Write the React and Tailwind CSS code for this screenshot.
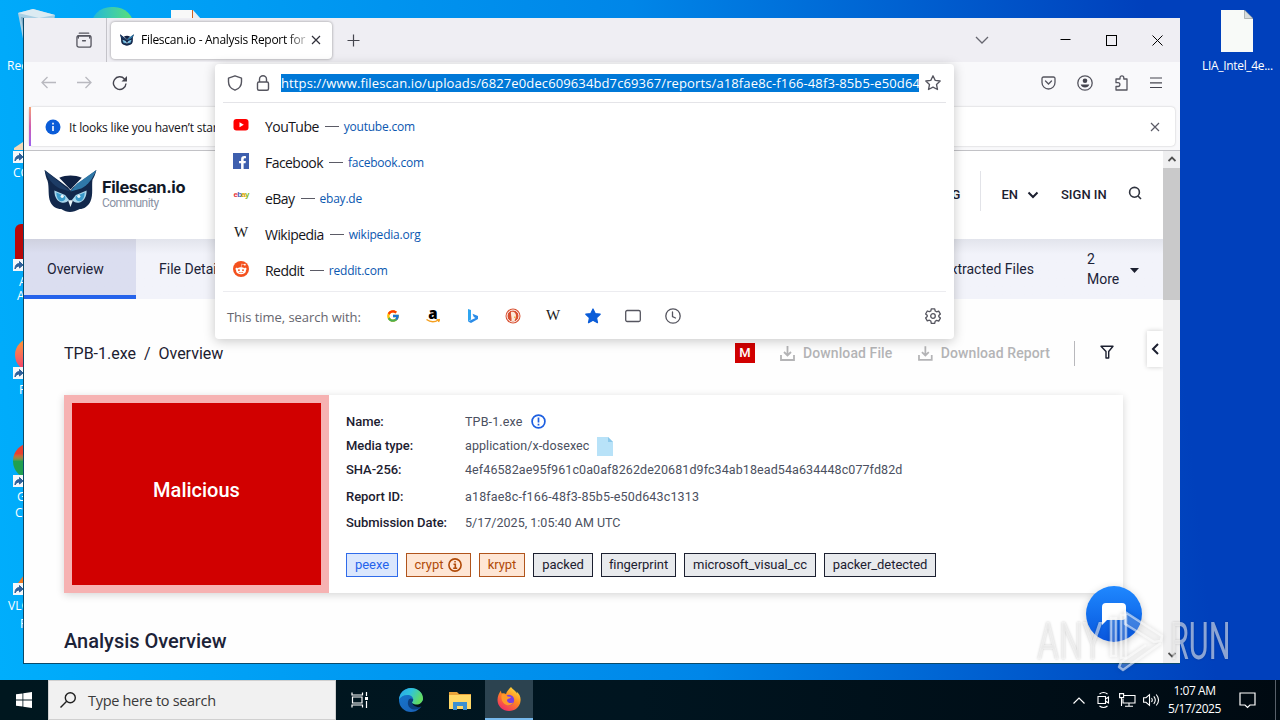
import React from 'react';
import { FcGoogle } from 'react-icons/fc';
import { FaRedditAlien, FaFacebookF } from 'react-icons/fa';

const suggestions = [
  { id: 'youtube', name: 'YouTube', url: 'youtube.com' },
  { id: 'facebook', name: 'Facebook', url: 'facebook.com' },
  { id: 'ebay', name: 'eBay', url: 'ebay.de' },
  { id: 'wikipedia', name: 'Wikipedia', url: 'wikipedia.org' },
  { id: 'reddit', name: 'Reddit', url: 'reddit.com' },
];

const details = [
  { label: 'Name:', value: 'TPB-1.exe', row: 'h-6', spacing: 'tracking-[0.15px]', extra: 'alert' },
  { label: 'Media type:', value: 'application/x-dosexec', row: 'h-6', spacing: 'tracking-[0.08px]', extra: 'file' },
  { label: 'SHA-256:', value: '4ef46582ae95f961c0a0af8262de20681d9fc34ab18ead54a634448c077fd82d', row: 'h-6', spacing: 'tracking-[0.09px]' },
  { label: 'Report ID:', value: 'a18fae8c-f166-48f3-85b5-e50d643c1313', row: 'h-[29px] pt-px', spacing: 'tracking-[0.16px]' },
  { label: 'Submission Date:', value: '5/17/2025, 1:05:40 AM UTC', row: 'h-6', spacing: 'tracking-[0.02px]' },
];

const tags = [
  { text: 'peexe', style: 'w-[52px] border-[#2f6bea] bg-[#dbe7fd] text-[#2563eb]' },
  { text: 'crypt', style: 'w-[65px] border-[#b0541c] bg-[#fee6d5] text-[#b04a08]', info: true },
  { text: 'krypt', style: 'w-[46px] border-[#b0541c] bg-[#fee6d5] text-[#b04a08]' },
  { text: 'packed', style: 'w-[60px] border-[#1c2030] bg-[#e8eaed] text-[#1c2030]' },
  { text: 'fingerprint', style: 'w-[75px] border-[#1c2030] bg-[#e8eaed] text-[#1c2030]' },
  { text: 'microsoft_visual_cc', style: 'w-[132px] border-[#1c2030] bg-[#e8eaed] text-[#1c2030]' },
  { text: 'packer_detected', style: 'w-[112px] border-[#1c2030] bg-[#e8eaed] text-[#1c2030]' },
];

const Owl = ({ className }) => (
  <svg className={className} viewBox="0 0 53 43">
    <path d="M0 0l24 18 2.500 3 2.500-3L53 0c-1 4-2 7-4 10-1 7 1 15-2 22-2 5-7 8-11 8-4 2-7 3-10 3s-6-1-9-3c-5 0-9-3-11-7-3-7-1-15-3-22C1.500 8 .5 4 0 0z" fill="#12284c" />
    <path d="M15 8c7-3 16-3 23 0L26.500 20 15 8z" fill="#0f2144" />
    <path d="M53 0L33 14l-6.500 8 11-3C45 15 49 9 53 0z" fill="#2f78a8" />
    <path d="M0 0l17 14 9.500 8-11-3C8 15 3 9 0 0z" fill="#1d3c66" />
    <path d="M10 21l11 4.500 5.500 7 5.500-7L43 21c0 7-3 11.500-8 12.500-3 .5-5.500-1-7-3l-1.500 3-1.500-3c-1.500 2-4 3.500-7 3C13 32.500 10 28 10 21z" fill="#a9d6ec" />
    <path d="M12 23l9 4c1 3-1 5.500-4 5S12 28 12 23zM41 23l-9 4c-1 3 1 5.500 4 5s5-4 5-9z" fill="#3a9acb" />
    <circle cx="18" cy="27" r="1.600" fill="#eaf6fb" />
    <circle cx="35" cy="27" r="1.600" fill="#eaf6fb" />
    <path d="M24 31h5l-2.500 7z" fill="#e8f3f8" />
  </svg>
);

const ShortcutArrow = () => (
  <svg className="h-3 w-3" viewBox="0 0 12 12">
    <rect width="12" height="12" fill="#f4f7fa" />
    <path d="M2 10c0-4 2-5.500 4.500-5.500V2.500L10 6 6.500 9V7C4.500 7 3 8 2 10z" fill="#2d5f9a" stroke="#2d5f9a" strokeWidth="1" />
  </svg>
);

const EdgeLogo = ({ className }) => (
  <svg className={className} viewBox="0 0 24 24">
    <defs>
      <linearGradient id="edgeTop" x1="0" x2="1" y1="0" y2="0.400">
        <stop offset="0" stopColor="#2aa5e8" />
        <stop offset="0.500" stopColor="#2fc3dc" />
        <stop offset="1" stopColor="#62dc62" />
      </linearGradient>
      <linearGradient id="edgeBody" x1="0" x2="1" y1="0" y2="1">
        <stop offset="0" stopColor="#1478ce" />
        <stop offset="1" stopColor="#1b5fb5" />
      </linearGradient>
    </defs>
    <circle cx="12" cy="12" r="12" fill="url(#edgeBody)" />
    <path d="M0 11.500C.5 5 5.500 0 12 0s12 4.500 12 10.500c0 4-3 6.500-6.500 6.500-2.500 0-4.500-1-4.500-2.200 0-.8 1.200-1.300 1.200-3.300C14.200 9 11.700 7 8.500 7 4.500 7 1.500 8.800 0 11.500z" fill="url(#edgeTop)" />
    <path d="M9.500 12c-2 5 1 9 5.500 9.500 3 .3 5.500-.8 7.500-3-3 1-7.500.5-9.500-3.700-.5-1.300 1.200-1.300 1.200-3.300-1.500-1.500-3.700-1-4.700.5z" fill="#0b3f7d" />
    <path d="M24.500 11v5.500l-2 2c-3.500 1.500-8 .5-9.500-3.700 2 2.500 9 3.200 11.500-3.800z" fill="#02141c" />
  </svg>
);

const FirefoxLogo = ({ className }) => (
  <svg className={className} viewBox="0 0 24 24">
    <defs>
      <linearGradient id="foxBody" x1="0.800" x2="0.200" y1="0" y2="1">
        <stop offset="0" stopColor="#ffe23e" />
        <stop offset="0.450" stopColor="#ff8a1f" />
        <stop offset="1" stopColor="#f0266c" />
      </linearGradient>
    </defs>
    <path d="M14 0c1 2 5 4 6 6.500 0-.8-.2-1.500-.5-2C22.500 7 24 10 23.500 14 23 20 18 24 12 24S.5 19.500.5 13C.5 9 2 6 4 3.500c0 1.500.3 2.300.8 3C6 6 8 6.300 9 7.300 9.500 4.500 12 2 14 0z" fill="url(#foxBody)" />
    <circle cx="12" cy="13" r="5.200" fill="#7a3fe0" />
    <path d="M5 7c3 0 5 1 5.500 2.500L14 10c-.5 1.500-3 1.500-4 3 0 2.500 3 4 6 2.500-1 3-6 4-9 1S4 9.500 5 7z" fill="#ff9a2a" />
  </svg>
);

const SiteIcon = ({ id }) => {
  if (id === 'youtube') {
    return (
      <svg className="h-4 w-4" viewBox="0 0 16 16">
        <rect x="0.500" y="2" width="15" height="11.500" rx="3" fill="#ff0000" />
        <path d="M6.500 5.300v5l4.300-2.500z" fill="#fff" />
      </svg>
    );
  }
  if (id === 'facebook') {
    return (
      <span className="flex h-4 w-4 items-end justify-end bg-[#3e5fae] pr-0.5">
        <FaFacebookF className="h-[13px] w-[9px] text-white" />
      </span>
    );
  }
  if (id === 'ebay') {
    return (
      <span className="flex h-4 w-4 items-center justify-center pb-1 font-['Liberation_Sans'] text-[8px] font-bold leading-none tracking-[-0.8px]">
        <span className="text-[#e53238]">e</span>
        <span className="text-[#4a62b8]">b</span>
        <span className="text-[#e0a800]">a</span>
        <span className="text-[#86b817]">y</span>
      </span>
    );
  }
  if (id === 'wikipedia') {
    return (
      <span className="flex h-4 w-4 items-center justify-center font-['Liberation_Serif'] text-[15px] leading-none text-[#1a1a1a]">W</span>
    );
  }
  return (
    <span className="flex h-4 w-4 items-center justify-center rounded-full bg-[#f4511e]">
      <FaRedditAlien className="h-3 w-3 text-white" />
    </span>
  );
};

const DownloadIcon = () => (
  <svg className="h-[15px] w-[15px]" viewBox="0 0 15 15" fill="none" stroke="#b4b4b6" strokeWidth="1.800">
    <path d="M1 9v5h13V9M7.500 0v9M4 6l3.500 3.500L11 6" />
  </svg>
);

const DesktopIcons = () => (
  <>
    {/* Left column, mostly covered by the browser */}
    <svg className="absolute left-[17px] top-[9px] h-10 w-10" viewBox="0 0 40 40">
      <path d="M1 4l15-4 22 6-5 32-25 2z" fill="#a8cfe4" />
      <path d="M1 4l15-4 22 6-16 3z" fill="#dcebf2" />
      <path d="M4 8l15 3v28l-10-2z" fill="#7ca9c4" />
    </svg>
    <div className="absolute left-[91px] top-[7px] h-10 w-[43px] rounded-full bg-linear-to-r from-[#22b5d8] to-[#5ce070]"></div>
    <div className="absolute left-[171px] top-[10px] h-10 w-[22px] border-r border-[#d06020] bg-[#f8f8f8]"></div>
    <svg className="absolute left-[193px] top-[10px] h-3 w-2" viewBox="0 0 8 12"><path d="M0 0l8 9v3H0z" fill="#e8eef2" /></svg>
    <span className="absolute left-[7px] top-[58px] text-[12px] leading-4">Recycle</span>
    <svg className="absolute left-[14px] top-[134px] h-4 w-3" viewBox="0 0 12 16"><path d="M0 14L12 6v10H0z" fill="#f2d9b8" /><path d="M9 6l3-6v8z" fill="#b32020" /></svg>
    <div className="absolute left-[13px] top-[151px]"><ShortcutArrow /></div>
    <span className="absolute left-[13px] top-[165px] text-[12px] leading-4">CC</span>
    <div className="absolute left-[15px] top-[224px] h-10 w-10 rounded-md bg-[#b80808]"></div>
    <div className="absolute left-[13px] top-[259px]"><ShortcutArrow /></div>
    <div className="absolute left-[17px] top-[275px] flex w-4 flex-col text-[12px] leading-[14px]">
      <span className="pl-0.5">A</span>
      <span>A</span>
    </div>
    <div className="absolute left-[15px] top-[338px] h-[34px] w-[34px] rounded-full bg-linear-to-b from-[#ff9a20] to-[#f03070]"></div>
    <div className="absolute left-[13px] top-[367px]"><ShortcutArrow /></div>
    <span className="absolute left-[19px] top-[382px] text-[12px] leading-4">F</span>
    <div className="absolute left-[13px] top-[443px] h-9 w-9 rounded-full bg-linear-to-b from-[#e84030] from-30% to-[#20a050] to-50%"></div>
    <div className="absolute left-[13px] top-[475px]"><ShortcutArrow /></div>
    <span className="absolute left-[17px] top-[489px] text-[12px] leading-4">G</span>
    <span className="absolute left-[15px] top-[505px] text-[12px] leading-4">C</span>
    <svg className="absolute left-[18px] top-[575px] h-2 w-2" viewBox="0 0 8 8"><path d="M0 8l6-8 2 8z" fill="#f07820" /></svg>
    <div className="absolute left-[13px] top-[583px]"><ShortcutArrow /></div>
    <span className="absolute left-[8px] top-[598px] text-[12px] leading-4">VLC</span>
    <span className="absolute left-[20px] top-[616px] text-[12px] leading-4">P</span>

    {/* File on the right */}
    <svg className="absolute left-[1221px] top-[10px] h-[42px] w-8" viewBox="0 0 32 42">
      <path d="M0 0h23l9 9v33H0z" fill="#f8faf8" />
      <path d="M23.500 0v8.500H32z" fill="#d8dcdc" stroke="#8a9090" strokeWidth="0.600" />
    </svg>
    <span className="absolute left-[1202px] top-[58px] whitespace-nowrap text-[12px] leading-4 tracking-[-0.32px]">LIA_Intel_4e...</span>
  </>
);

const TabStrip = () => (
  <div className="flex h-11 shrink-0 items-center bg-[#efeef3]">
    <div className="flex h-full w-[83px] items-center justify-end border-r border-[#c4c3c9] pr-[14px]">
      <svg className="h-4 w-4" viewBox="0 0 17 17" fill="none" stroke="#55555f" strokeWidth="1.400" strokeLinecap="round">
        <path d="M3.500 1.200h10" />
        <rect x="1" y="4" width="15" height="12" rx="2" />
        <path d="M2.500 6.500V4h12v2.500M7 9.300h3" />
      </svg>
    </div>
    <div className="ml-1 flex h-[37px] w-[221px] items-center rounded bg-white pl-[9px] shadow-[0_0_3px_rgba(0,0,0,0.4)]">
      <Owl className="h-3 w-[14px]" />
      <span className="ml-[7px] w-[165px] overflow-hidden whitespace-nowrap bg-linear-to-r from-black from-88% to-[#00000040] bg-clip-text text-[12px] leading-5 tracking-[-0.28px] text-transparent">
        Filescan.io - Analysis Report for
      </span>
      <svg className="ml-1 h-3 w-3" viewBox="0 0 12 12" stroke="#30303a" strokeWidth="1.200"><path d="M2 2l8 8M10 2l-8 8" /></svg>
    </div>
    <svg className="ml-[15px] h-[13px] w-[13px]" viewBox="0 0 13 13" stroke="#45454e" strokeWidth="1.200"><path d="M6.500 0.500v12M0.500 6.500h12" /></svg>
    <svg className="ml-auto h-2 w-[14px]" viewBox="0 0 14 8" fill="none" stroke="#66666f" strokeWidth="1.300"><path d="M1 1l6 6 6-6" /></svg>
    <svg className="ml-[71px] h-[11px] w-[11px]" viewBox="0 0 11 11" stroke="#000"><path d="M0.500 4.500h10" /></svg>
    <div className="ml-[35px] h-[11px] w-[11px] border border-black"></div>
    <svg className="ml-[35px] mr-[17px] h-[11px] w-[11px]" viewBox="0 0 11 11" stroke="#000"><path d="M0.500 0.500l10 10M10.500 0.500l-10 10" /></svg>
  </div>
);

const NavBar = () => (
  <div className="flex h-[44px] shrink-0 items-center bg-[#f9f9fb] pb-[3px]">
    <svg className="ml-[17px] h-[13px] w-[15px]" viewBox="0 0 15 13" fill="none" stroke="#b9b9bf" strokeWidth="1.300"><path d="M15 6.500H1M6.500 1L1 6.500 6.500 12" /></svg>
    <svg className="ml-[21px] h-[13px] w-[15px]" viewBox="0 0 15 13" fill="none" stroke="#b9b9bf" strokeWidth="1.300"><path d="M0 6.500h14M8.500 1L14 6.500 8.500 12" /></svg>
    <svg className="ml-[20px] h-4 w-4" viewBox="0 0 16 16" fill="none" stroke="#45454f" strokeWidth="1.400">
      <path d="M14 8.500A6.300 6.300 0 1 1 12.500 4" />
      <path d="M15 1v5.500H9.500z" fill="#45454f" stroke="none" />
    </svg>
    <svg className="ml-auto h-[14px] w-[15px]" viewBox="0 0 15 14" fill="none" stroke="#55555f" strokeWidth="1.300" strokeLinecap="round">
      <path d="M2.500 1h10a1.500 1.500 0 0 1 1.500 1.500V6.500a6.500 6.500 0 0 1-13 0V2.500A1.500 1.500 0 0 1 2.500 1zM4.500 5l3 3 3-3" />
    </svg>
    <svg className="ml-[21px] h-4 w-4" viewBox="0 0 16 16">
      <circle cx="8" cy="8" r="7.200" fill="none" stroke="#55555f" strokeWidth="1.300" />
      <circle cx="8" cy="5.800" r="2.300" fill="#45454f" />
      <path d="M3.700 9.500h8.600c-.5 2-2.200 3-4.300 3s-3.800-1-4.300-3z" fill="#45454f" />
    </svg>
    <svg className="ml-5 h-4 w-4" viewBox="0 0 16 16" fill="none" stroke="#55555f" strokeWidth="1.300" strokeLinejoin="round">
      <path d="M7 4V2.800a1.900 1.900 0 0 1 3.800 0V4H14v11H3v-3.500H5a1.900 1.900 0 0 0 0-3.800H3V4z" />
    </svg>
    <svg className="ml-[21px] mr-[18px] h-3 w-3" viewBox="0 0 12 12" stroke="#45454f" strokeWidth="1.200"><path d="M0 1h12M0 5.800h12M0 10.500h12" /></svg>
  </div>
);

const NotificationBar = () => (
  <div className="flex h-[45px] shrink-0 items-start border-b border-[#c2c2c6] bg-[#f9f9fb] pl-[5px] pt-[1px]">
    <div className="flex h-[39px] w-[1146px] items-center rounded-sm bg-white shadow-[0_0_2px_rgba(0,0,0,0.25)]">
      <div className="h-full w-0.5 bg-linear-to-b from-[#f5a070] via-[#d05ab0] to-[#9a60f0]"></div>
      <svg className="ml-[14px] h-4 w-4" viewBox="0 0 16 16">
        <circle cx="8" cy="8" r="7.500" fill="#0a5cd8" />
        <path d="M8 7v5M8 3.700v1.800" stroke="#fff" strokeWidth="1.600" />
      </svg>
      <span className="ml-2 whitespace-nowrap pt-0.5 text-[12px] leading-5 tracking-[-0.2px] text-[#15141a]">It looks like you haven’t started</span>
      <svg className="ml-auto mr-[15px] h-[10px] w-[10px]" viewBox="0 0 10 10" stroke="#5b5b66" strokeWidth="1.200"><path d="M1 1l8 8M9 1l-8 8" /></svg>
    </div>
  </div>
);

const UrlPanel = () => (
  <div className="absolute left-[191px] top-[46px] flex h-[275px] w-[739px] flex-col rounded-sm bg-white shadow-[0_2px_12px_rgba(0,0,0,0.22)]">
    <div className="mx-2 flex h-[39px] items-center border-b border-[#e4e4e8]">
      <svg className="ml-1 h-4 w-4" viewBox="0 0 16 16" fill="none" stroke="#55555f" strokeWidth="1.400" strokeLinejoin="round">
        <path d="M8 .8l6.500 2.400v3.500c0 4-2.500 7-6.500 8.500-4-1.500-6.500-4.500-6.500-8.500V3.200z" />
      </svg>
      <svg className="ml-3 h-4 w-4" viewBox="0 0 16 16" fill="none" stroke="#55555f" strokeWidth="1.400">
        <rect x="2.500" y="7" width="11" height="8.200" rx="1.500" />
        <path d="M4.500 7V4.300a3.500 3.500 0 0 1 7 0V7" />
      </svg>
      <span className="ml-[10px] h-[18px] w-[638px] overflow-hidden whitespace-nowrap bg-[#0078d7] text-[13px] leading-[18px] tracking-[0.12px] text-white">
        https://www.filescan.io/uploads/6827e0dec609634bd7c69367/reports/a18fae8c-f166-48f3-85b5-e50d643c1313
      </span>
      <svg className="ml-[6px] h-4 w-4" viewBox="0 0 16 16" fill="none" stroke="#55555f" strokeWidth="1.300" strokeLinejoin="round">
        <path d="M8 .8l2.200 4.600 5 .6-3.700 3.500 1 5L8 12.100l-4.500 2.400 1-5L.8 6l5-.6z" />
      </svg>
    </div>
    <div className="flex flex-col pt-[5px]">
      {suggestions.map((site) => (
        <div key={site.id} className="flex h-9 items-center pl-[18px]">
          <div className="pb-[3px]">
            <SiteIcon id={site.id} />
          </div>
          <span className="ml-4 pt-0.5 text-[14px] leading-5 tracking-[-0.55px] text-[#15141a]">{site.name}</span>
          <span className="ml-1.5 h-px w-[14px] bg-[#5b5b66]"></span>
          <span className="ml-[5px] pt-0.5 text-[12px] leading-5 tracking-[-0.22px] text-[#0b57b0]">{site.url}</span>
        </div>
      ))}
    </div>
    <div className="mx-2 mt-[3px] flex h-12 items-center border-t border-[#ececf0] pl-1">
      <span className="w-[159px] whitespace-nowrap pt-0.5 text-[13px] leading-5 tracking-[-0.05px] text-[#66666e]">This time, search with:</span>
      <FcGoogle className="h-[14px] w-[14px]" />
      <div className="ml-[26px] flex h-4 w-[14px] flex-col items-center">
        <span className="font-['Open_Sans'] text-[15px] font-extrabold leading-[11px] text-black">a</span>
        <svg className="h-1 w-[14px]" viewBox="0 0 14 4" fill="none" stroke="#f5a020" strokeWidth="1.400"><path d="M0.500 0.500c4 3 8 3 12 .5M10.500.5h3l-1 2.500" /></svg>
      </div>
      <svg className="ml-[27px] h-4 w-3" viewBox="0 0 12 16">
        <path d="M1 1l3 1v9.500L1 13.500z" fill="#2fa5f0" />
        <path d="M1 13.500L4 15l7-4V8L5.500 5.800 6.800 9 8.500 10 4 12z" fill="#2b8ce8" />
      </svg>
      <svg className="ml-[26px] h-4 w-4" viewBox="0 0 16 16">
        <circle cx="8" cy="8" r="7.500" fill="#d85030" />
        <circle cx="8" cy="8" r="6" fill="#d85030" stroke="#fff" />
        <path d="M6 4c3-1 5 1 5 4 0 2-1 3-1.500 5h-3C7 10 5.500 6 6 4z" fill="#fbe8d8" />
        <path d="M9 8.500l3 .5-3 1z" fill="#f0a830" />
      </svg>
      <span className="ml-[25px] font-['Liberation_Serif'] text-[15px] leading-none text-[#1a1a1a]">W</span>
      <svg className="ml-[25px] h-4 w-4" viewBox="0 0 16 16" fill="#0a5cd8" stroke="#0a5cd8" strokeWidth="1.200" strokeLinejoin="round">
        <path d="M8 1l2.200 4.600 5 .6-3.700 3.500 1 5L8 12.300l-4.500 2.400 1-5L.8 6.200l5-.6z" />
      </svg>
      <svg className="ml-6 h-4 w-4" viewBox="0 0 16 16" fill="none" stroke="#55555f" strokeWidth="1.300"><rect x="0.700" y="2.500" width="14.600" height="11" rx="1.500" /></svg>
      <svg className="ml-6 h-4 w-4" viewBox="0 0 16 16" fill="none" stroke="#55555f" strokeWidth="1.300" strokeLinecap="round"><circle cx="8" cy="8" r="7.200" /><path d="M7.500 4v4.500l3 1.500" /></svg>
      <svg className="ml-auto mr-[5px] h-4 w-4" viewBox="0 0 16 16" fill="none" stroke="#55555f" strokeWidth="1.300" strokeLinejoin="round">
        <path d="M6.300.8h3.400l.5 2.200 1.400.8 2.100-.7 1.700 3-1.600 1.400v1.200l1.600 1.400-1.700 3-2.100-.7-1.400.8-.5 2.200H6.300L5.800 13l-1.400-.8-2.100.7-1.700-3 1.600-1.400V7.300L.6 6l1.700-3 2.100.7L5.800 3z" />
        <circle cx="8" cy="8" r="2.300" />
      </svg>
    </div>
  </div>
);

const PageHeader = () => (
  <div className="flex h-[88px] shrink-0 items-center bg-white pl-5 font-['Roboto',sans-serif]">
    <Owl className="mb-2 h-[42px] w-[53px]" />
    <div className="mb-[3px] ml-[5px] flex flex-col">
      <span className="font-['Inter',sans-serif] text-[16.5px] font-bold leading-[18px] tracking-[-0.4px] text-[#111827]">Filescan.io</span>
      <span className="text-[12px] leading-[14px] tracking-[-0.55px] text-[#8a92a4]">Community</span>
    </div>
    <span className="ml-auto text-[13px] font-medium text-[#1c2030]">BLOG</span>
    <div className="mb-2 ml-5 h-10 w-px bg-[#e2e3e8]"></div>
    <span className="ml-5 text-[13px] font-medium text-[#1c2030]">EN</span>
    <svg className="ml-[9px] h-2 w-3" viewBox="0 0 12 8" fill="none" stroke="#1c2030" strokeWidth="2"><path d="M1.500 1.500L6 6l4.500-4.500" /></svg>
    <span className="ml-[22px] w-[46px] whitespace-nowrap text-[13px] font-medium text-[#1c2030]">SIGN IN</span>
    <svg className="mb-[5px] ml-[21px] mr-[21px] h-[14px] w-[14px]" viewBox="0 0 14 14" fill="none" stroke="#30343f" strokeWidth="1.600"><circle cx="6.500" cy="6.300" r="4.900" /><path d="M10 10l3 3" /></svg>
  </div>
);

const SectionTabs = () => (
  <div className="flex h-[60px] shrink-0 items-stretch bg-linear-to-b from-[#e2e4ec] to-[#f2f3fa] to-25% font-['Roboto',sans-serif] text-[14px] text-[#1c2338]">
    <div className="flex w-28 items-center border-b-4 border-[#2563eb] bg-linear-to-b from-[#cfd1df] to-[#dbdef0] to-25% pl-[23px] pt-1">Overview</div>
    <div className="flex items-center pl-[23px]">File Details</div>
    <div className="ml-auto flex items-center">Extracted Files</div>
    <div className="ml-[53px] flex w-[38px] items-center leading-5">2 More</div>
    <svg className="ml-[5px] mr-6 mt-[29px] h-[5px] w-[9px]" viewBox="0 0 9 5"><path d="M0 0h9L4.500 5z" fill="#1c2030" /></svg>
  </div>
);

const ReportCard = () => (
  <div className="ml-10 flex h-[198px] w-[1059px] shrink-0 bg-white shadow-[0_2px_8px_rgba(0,0,0,0.16)]">
    <div className="flex w-[265px] items-center justify-center border-8 border-[#f6b2b2] bg-[#d10000] pb-2 text-[20px] font-medium text-white">
      Malicious
    </div>
    <div className="flex flex-col pl-[17px] pt-[15px] text-[13px]">
      {details.map((item) => (
        <div key={item.label} className={`flex items-center ${item.row}`}>
          <span className="w-[119px] whitespace-nowrap font-medium tracking-[-0.05px] text-[#1c2030]">{item.label}</span>
          <span className={`whitespace-nowrap text-[12.5px] text-[#4b5060] ${item.spacing}`}>{item.value}</span>
          {item.extra === 'alert' && (
            <svg className="mb-0.5 ml-2 h-[15px] w-[15px]" viewBox="0 0 15 15" fill="none" stroke="#1d5fe0" strokeWidth="1.700"><circle cx="7.500" cy="7.500" r="6.400" /><path d="M7.500 3.500v5M7.500 9.800v1.700" /></svg>
          )}
          {item.extra === 'file' && (
            <svg className="ml-2 h-[19px] w-4" viewBox="0 0 16 19"><path d="M0 0h11l5 5v14H0z" fill="#b8e2f8" /><path d="M11 0v5h5z" fill="#8cc8ea" /></svg>
          )}
        </div>
      ))}
      <div className="mt-[18px] flex gap-2">
        {tags.map((tag) => (
          <span key={tag.text} className={`flex h-6 items-center justify-center whitespace-nowrap border pb-0.5 text-[13px] leading-none tracking-[-0.05px] ${tag.style}`}>
            {tag.text}
            {tag.info && (
              <svg className="-mb-0.5 ml-[5px] h-[14px] w-[14px]" viewBox="0 0 14 14" fill="none" stroke="#b04a08" strokeWidth="1.600"><circle cx="7" cy="7" r="6.100" /><path d="M5.500 6.300H7.300v4.200M5.200 10.300h4M6.300 3.700h1.500" /></svg>
            )}
          </span>
        ))}
      </div>
    </div>
  </div>
);

const Page = () => (
  <div className="flex w-[1139px] flex-col overflow-hidden bg-[#fefefe]">
    <PageHeader />
    <SectionTabs />
    <div className="flex h-24 shrink-0 items-center pl-10 pt-3 font-['Roboto',sans-serif] text-[#1c2030]">
      <span className="whitespace-pre pt-0.5 text-[16px]">TPB-1.exe  /  Overview</span>
      <span className="ml-auto flex h-5 w-5 items-center justify-center bg-[#d10000] text-[13px] font-medium text-white">M</span>
      <div className="ml-[25px] flex w-[138px] items-center gap-2 whitespace-nowrap text-[14px] font-medium tracking-[0.1px] text-[#b4b4b6]"><DownloadIcon />Download File</div>
      <div className="flex w-[132px] items-center gap-2 whitespace-nowrap text-[14px] font-medium tracking-[0.1px] text-[#b4b4b6]"><DownloadIcon />Download Report</div>
      <div className="ml-6 h-[25px] w-px bg-[#b8b8bc]"></div>
      <svg className="mb-[3px] ml-[25px] h-[14px] w-[14px]" viewBox="0 0 14 14" fill="none" stroke="#1c2030" strokeWidth="1.400" strokeLinejoin="round"><path d="M1 1.200h12L8.700 6.500V13H6V6.500z" /></svg>
      <div className="mb-2 ml-[33px] flex h-9 w-4 items-center justify-center bg-white shadow-[0_0_5px_rgba(0,0,0,0.2)]">
        <svg className="h-3 w-2" viewBox="0 0 8 12" fill="none" stroke="#1c2030" strokeWidth="2"><path d="M7 1L2 6l5 5" /></svg>
      </div>
    </div>
    <div className="flex flex-col font-['Roboto',sans-serif]">
      <ReportCard />
      <h2 className="ml-10 mt-[34px] text-[20px] font-medium leading-7 text-[#1c2338]">Analysis Overview</h2>
    </div>
  </div>
);

const BrowserWindow = () => (
  <div className="absolute left-[23px] top-[18px] flex h-[646px] w-[1157px] flex-col border-b border-l border-[#0a4a6a] bg-white">
    <TabStrip />
    <NavBar />
    <NotificationBar />
    <div className="flex h-[512px]">
      <Page />
      <div className="flex w-[17px] flex-col items-center bg-[#efeff0]">
        <svg className="mt-[5px] h-[6px] w-2" viewBox="0 0 8 6" fill="none" stroke="#505050" strokeWidth="1.800"><path d="M0.500 5L4 1.500 7.500 5" /></svg>
        <div className="mt-[6px] h-[132px] w-full bg-[#c9c9ca]"></div>
        <svg className="mb-[5px] mt-auto h-[6px] w-2" viewBox="0 0 8 6" fill="none" stroke="#505050" strokeWidth="1.800"><path d="M0.500 1L4 4.500 7.500 1" /></svg>
      </div>
    </div>
    <UrlPanel />
    {/* Chat launcher */}
    <div className="absolute left-[1062px] top-[568px] flex h-14 w-14 items-center justify-center rounded-full bg-linear-to-b from-[#2088ff] to-[#0a55dc] shadow-[0_2px_8px_rgba(0,0,0,0.2)]">
      <svg className="h-[22px] w-6" viewBox="0 0 24 22"><path d="M4 0h16a4 4 0 0 1 4 4v9a4 4 0 0 1-4 4H5l-5 5V4a4 4 0 0 1 4-4z" fill="#fff" /></svg>
    </div>
  </div>
);

const Watermark = () => (
  <div className="absolute left-[1037px] top-[609px] flex h-[64px] w-[194px] items-center font-['Roboto',sans-serif] text-[51px] leading-none text-white/55 [text-shadow:0_0_3px_rgba(0,0,0,0.2)]">
    <span className="w-[70px] origin-left scale-x-[0.66]">ANY</span>
    <svg className="h-[64px] w-[58px] shrink-0 drop-shadow-[0_0_2px_rgba(0,0,0,0.25)]" viewBox="0 0 58 64" fill="#ffffff" fillOpacity="0.200" stroke="#ffffff" strokeOpacity="0.550" strokeWidth="2.500" strokeLinejoin="round">
      <path d="M4 9h5v38H4zM14 6h5v43h-5z" />
      <path d="M18 3l37 24-1 5-7 1-29-18z" />
      <path d="M54 34L16 61l-4-3 2-5 25-17" />
    </svg>
    <span className="ml-[5px] origin-left scale-x-[0.6]">RUN</span>
  </div>
);

const Taskbar = () => (
  <div className="flex h-10 items-center bg-linear-to-r from-[#00171f] via-[#001520] to-[#000a12] text-white">
    <div className="flex h-full w-12 items-center justify-center">
      <svg className="h-4 w-4" viewBox="0 0 16 16" fill="#fff"><path d="M0 2.300l6.500-.9v6.100H0zM7.300 1.300L16 0v7.500H7.300zM0 8.400h6.500v6.200L0 13.700zM7.300 8.400H16V16l-8.700-1.300z" /></svg>
    </div>
    <div className="flex h-full w-72 items-center border border-[#d0d0d0] bg-[#f1f1f1] pl-[11px]">
      <svg className="h-4 w-4" viewBox="0 0 16 16" fill="none" stroke="#202020" strokeWidth="1.400"><circle cx="10.300" cy="5.700" r="5" /><path d="M6.700 9.300L.5 15.500" /></svg>
      <span className="ml-3 pt-0.5 text-[14.500px] tracking-[-0.3px] text-[#3a3a3a]">Type here to search</span>
    </div>
    <div className="flex h-full w-12 items-center justify-center pr-px">
      <svg className="h-4 w-[17px]" viewBox="0 0 17 16" fill="none" stroke="#fff" strokeWidth="1.200"><path d="M1 .500v2.500h10.500V.500M1 15.500V13h10.500v2.500M1.500 5h9.500v6H1.500zM15.500 0v4M15.500 9v7" /><path d="M14 5h3v3h-3z" fill="#fff" stroke="none" /></svg>
    </div>
    <div className="ml-[3px] flex h-full w-12 items-center justify-center"><EdgeLogo className="h-6 w-6" /></div>
    <div className="ml-px flex h-full w-12 items-center justify-center">
      <svg className="h-[19px] w-[22px]" viewBox="0 0 22 19"><path d="M0 1h8l2 2h12v15H0z" fill="#e8a33a" /><path d="M0 4h22v14H0z" fill="#ffd867" /><path d="M4 11h14v8h-4v-4H8v4H4z" fill="#3b8fd0" /></svg>
    </div>
    <div className="ml-px flex h-full w-12 items-center justify-center border-b-2 border-[#76b9ed] bg-[#2c4350]"><FirefoxLogo className="h-6 w-6" /></div>
    <svg className="ml-auto h-[7px] w-3" viewBox="0 0 12 7" fill="none" stroke="#fff" strokeWidth="1.200"><path d="M0.500 6.500L6 1l5.500 5.500" /></svg>
    <svg className="ml-3 h-4 w-[13px]" viewBox="0 0 13 16" fill="none" stroke="#fff" strokeWidth="1.100"><path d="M2.500 2c2.500-1.800 5.500-1.800 8 0M2.500 14c2.500 1.800 5.500 1.800 8 0M1 4.500h7.500v7H1zM8.500 7l3-2v6l-3-2" /></svg>
    <svg className="ml-[9px] h-[14px] w-[17px]" viewBox="0 0 17 14" fill="none" stroke="#fff" strokeWidth="1.100"><path d="M5 2.500h11v7.500H4V6M10 10v3M6 13.300h8M.600.600h4v4h-4zM2.500 4.600V13" /></svg>
    <svg className="ml-[7px] h-[14px] w-[17px]" viewBox="0 0 17 14" fill="none" stroke="#fff" strokeWidth="1.100"><path d="M.600 4.700H3l3.500-3v10.600l-3.500-3H.600zM8.500 5c1 1.300 1 2.700 0 4M10.800 3.300c2 2.500 2 5 0 7.500M13.200 1.500c3 3.500 3 7.500 0 11" /></svg>
    <div className="ml-2 flex w-[53px] flex-col items-center whitespace-nowrap text-[12px] leading-[18px] tracking-[-0.45px]">
      <span>1:07 AM</span>
      <span>5/17/2025</span>
    </div>
    <svg className="ml-[18px] mr-[19px] h-[17px] w-[17px]" viewBox="0 0 17 17" fill="none" stroke="#fff" strokeWidth="1.200"><path d="M1 1h15v12h-5L8.500 15.500 6 13H1z" /></svg>
    <div className="mr-1 h-full w-px bg-[#58606a]"></div>
  </div>
);

const App = () => {
  return (
    <div className="relative flex h-[720px] w-[1280px] flex-col overflow-hidden font-['Open_Sans',sans-serif]">
      <div className="relative h-[680px] bg-linear-[84deg] from-[#00aefc] via-[#0086e8] via-52% to-[#0040bc] to-90% text-white">
        <DesktopIcons />
        <BrowserWindow />
        <Watermark />
      </div>
      <Taskbar />
    </div>
  );
};

export default App;
